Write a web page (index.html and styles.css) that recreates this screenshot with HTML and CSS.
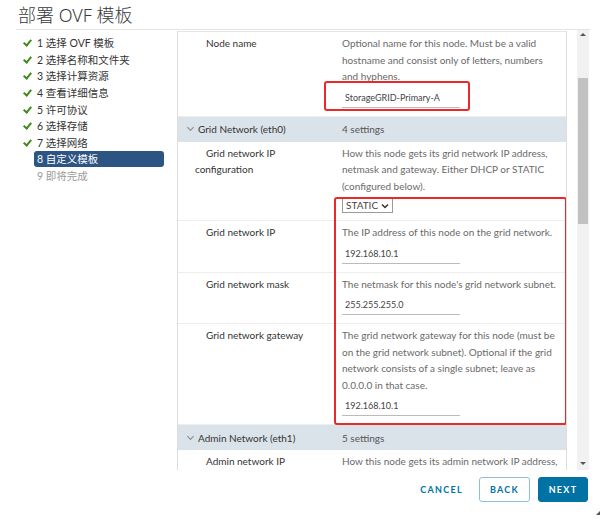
FILE: index.html
```html
<!DOCTYPE html>
<html lang="zh-CN">
<head>
    <meta charset="UTF-8">
    <meta name="viewport" content="width=device-width, initial-scale=1.0">
    <title>部署 OVF 模板</title>
    <link rel="stylesheet" href="styles.css">
</head>
<body>
    <div class="dialog">
        <h1 class="title">部署 OVF 模板</h1>

        <div class="main">
            <ul class="steps">
                <li class="step done"><span class="check"></span><span class="label">1 选择 OVF 模板</span></li>
                <li class="step done"><span class="check"></span><span class="label">2 选择名称和文件夹</span></li>
                <li class="step done"><span class="check"></span><span class="label">3 选择计算资源</span></li>
                <li class="step done"><span class="check"></span><span class="label">4 查看详细信息</span></li>
                <li class="step done"><span class="check"></span><span class="label">5 许可协议</span></li>
                <li class="step done"><span class="check"></span><span class="label">6 选择存储</span></li>
                <li class="step done"><span class="check"></span><span class="label">7 选择网络</span></li>
                <li class="step active"><span class="check"></span><span class="label">8 自定义模板</span></li>
                <li class="step todo"><span class="check"></span><span class="label">9 即将完成</span></li>
            </ul>

            <div class="panel">
                <div class="rows">
                    <div class="row">
                        <div class="name">Node name</div>
                        <div class="value">
                            <p class="desc">Optional name for this node. Must be a valid hostname and consist only of letters, numbers and hyphens.</p>
                            <div class="field">StorageGRID-Primary-A</div>
                        </div>
                    </div>

                    <div class="group"><span class="chevron"></span><span class="group-name">Grid Network (eth0)</span><span class="group-count">4 settings</span></div>

                    <div class="row">
                        <div class="name">Grid network IP configuration</div>
                        <div class="value">
                            <p class="desc">How this node gets its grid network IP address, netmask and gateway. Either DHCP or STATIC (configured below).</p>
                            <div class="select">STATIC <svg width="8" height="6" viewBox="0 0 8 6"><path d="M1 1.5 L4 4.5 L7 1.5" fill="none" stroke="#333" stroke-width="1.5"/></svg></div>
                        </div>
                    </div>
                    <div class="row">
                        <div class="name">Grid network IP</div>
                        <div class="value">
                            <p class="desc">The IP address of this node on the grid network.</p>
                            <div class="field">192.168.10.1</div>
                        </div>
                    </div>
                    <div class="row">
                        <div class="name">Grid network mask</div>
                        <div class="value">
                            <p class="desc">The netmask for this node's grid network subnet.</p>
                            <div class="field">255.255.255.0</div>
                        </div>
                    </div>
                    <div class="row">
                        <div class="name">Grid network gateway</div>
                        <div class="value">
                            <p class="desc">The grid network gateway for this node (must be on the grid network subnet). Optional if the grid network consists of a single subnet; leave as 0.0.0.0 in that case.</p>
                            <div class="field">192.168.10.1</div>
                        </div>
                    </div>

                    <div class="group"><span class="chevron"></span><span class="group-name">Admin Network (eth1)</span><span class="group-count">5 settings</span></div>

                    <div class="row">
                        <div class="name">Admin network IP</div>
                        <div class="value">
                            <p class="desc">How this node gets its admin network IP address,</p>
                        </div>
                    </div>

                    <!-- annotation boxes -->
                    <div class="mark mark-name"></div>
                    <div class="mark mark-grid"></div>
                </div>
            </div>

            <div class="scrollbar">
                <span class="arrow up"></span>
                <span class="thumb"></span>
                <span class="arrow down"></span>
            </div>
        </div>

        <div class="footer">
            <button class="btn btn-link">CANCEL</button>
            <button class="btn btn-outline">BACK</button>
            <button class="btn btn-primary">NEXT</button>
        </div>
        <span class="grip"></span>
    </div>
</body>
</html>
```

FILE: styles.css
```css
:root {
    --text: #333333;
    --muted: #6a6a6a;
    --border: #dddddd;
    --group: #dbe3ea;
    --primary: #0072a3;
    --nav-active: #2c5583;
    --check: #3e8a1a;
    --mark: #ea2a2a;
}

* {
    box-sizing: border-box;
}

body {
    margin: 0;
    background: #fff;
    color: var(--text);
    font-family: Lato, "Noto Sans CJK SC", sans-serif;
    font-size: 10px;
}

.dialog {
    position: relative;
    width: 606px;
    height: 521px;
}

.title {
    margin: 0 16px;
    padding: 4px 0 0 2px;
    height: 30px;
    font-family: "Noto Sans", "Noto Sans CJK SC", sans-serif;
    font-size: 18px;
    font-weight: 300;
    line-height: 22px;
    color: #3a3a3a;
    border-bottom: 1px solid #e3e3e3;
}

.main {
    display: flex;
    margin-left: 16px;
    height: 440px;
}

/* wizard steps */
.steps {
    list-style: none;
    margin: 0;
    padding: 5px 13px 0 6px;
    width: 161px;
    flex: none;
    font-size: 10.5px;
}

.step {
    display: flex;
    align-items: center;
    height: 16.6px;
}

.check {
    width: 12px;
    height: 16px;
    flex: none;
    position: relative;
}

.done .check::after {
    content: "";
    position: absolute;
    left: 3px;
    top: 3px;
    width: 3px;
    height: 6px;
    border: solid var(--check);
    border-width: 0 2px 2px 0;
    transform: rotate(40deg);
}

.label {
    flex: 1;
    padding: 0 3px;
    line-height: 16px;
    border-radius: 3px;
}

.active .label {
    background: var(--nav-active);
    color: #fff;
}

.todo .label {
    color: #9a9a9a;
}

/* settings panel */
.panel {
    width: 390px;
    flex: none;
    margin-top: 1px;
    border: 1px solid var(--border);
    border-bottom: none;
    border-top-color: #dfe6ec;
    overflow: hidden;
}

.rows {
    position: relative;
}

.row {
    display: grid;
    grid-template-columns: 156px 1fr;
    padding: 3px 0 8px;
    border-bottom: 1px solid #eeeeee;
    line-height: 16.5px;
}

.name {
    padding-left: 17px;
    text-indent: 11px;
    padding-right: 20px;
    color: var(--text);
}

.value {
    padding-left: 8px;
    padding-right: 6px;
}

.desc {
    margin: 0;
    color: var(--muted);
}

.field {
    margin-top: 5px;
    width: 118px;
    height: 18px;
    padding-left: 3px;
    font-size: 9px;
    line-height: 16px;
    color: #444;
    border-bottom: 1px solid #bbbbbb;
}

.select {
    display: flex;
    align-items: center;
    gap: 3px;
    width: fit-content;
    margin: 4px 0 -1px;
    height: 15px;
    padding: 0 3px;
    border: 1px solid #9a9a9a;
    color: #444;
    line-height: 13px;
}

.group {
    display: flex;
    align-items: center;
    height: 25px;
    background: var(--group);
    color: var(--text);
}

.chevron {
    width: 5px;
    height: 5px;
    margin: -3px 5px 0 10px;
    border: solid #888;
    border-width: 0 1px 1px 0;
    transform: rotate(45deg);
}

.group-name {
    width: 144px;
}

.group-count {
    color: #555;
}

.mark {
    position: absolute;
    border: 2px solid var(--mark);
    border-radius: 3px;
}

.mark-name {
    left: 146px;
    top: 49px;
    width: 146px;
    height: 30px;
}

.mark-grid {
    left: 156px;
    top: 165px;
    width: 233px;
    height: 228px;
}

/* scrollbar */
.scrollbar {
    display: flex;
    flex-direction: column;
    width: 12px;
    margin-left: 10px;
    background: #f1f1f1;
    padding: 0 1px;
}

.arrow {
    height: 10px;
    position: relative;
}

.arrow::after {
    content: "";
    position: absolute;
    left: 2px;
    border-left: 3px solid transparent;
    border-right: 3px solid transparent;
}

.up::after {
    top: 3px;
    border-bottom: 3px solid #555;
}

.down::after {
    bottom: 3px;
    border-top: 3px solid #555;
}

.thumb {
    margin-top: 38px;
    height: 146px;
    background: #c1c1c1;
}

.arrow.down {
    margin-top: auto;
    margin-bottom: 2px;
}

/* footer */
.footer {
    display: flex;
    justify-content: flex-end;
    gap: 8px;
    margin: 7px 18px 0 0;
}

.btn {
    height: 25px;
    padding: 0;
    border-radius: 3px;
    font-family: Lato, sans-serif;
    font-size: 9px;
    font-weight: 700;
    letter-spacing: 1.3px;
    cursor: pointer;
}

.btn-link {
    background: none;
    border: none;
    color: var(--primary);
    margin-right: 8px;
}

.btn-outline {
    width: 51px;
    background: #fff;
    border: 1px solid #8cc0da;
    color: var(--primary);
}

.btn-primary {
    width: 50px;
    background: var(--primary);
    border: 1px solid var(--primary);
    color: #fff;
}

.grip {
    position: absolute;
    right: 6px;
    bottom: 6px;
    border-left: 4px solid transparent;
    border-bottom: 4px solid #555;
}
```
